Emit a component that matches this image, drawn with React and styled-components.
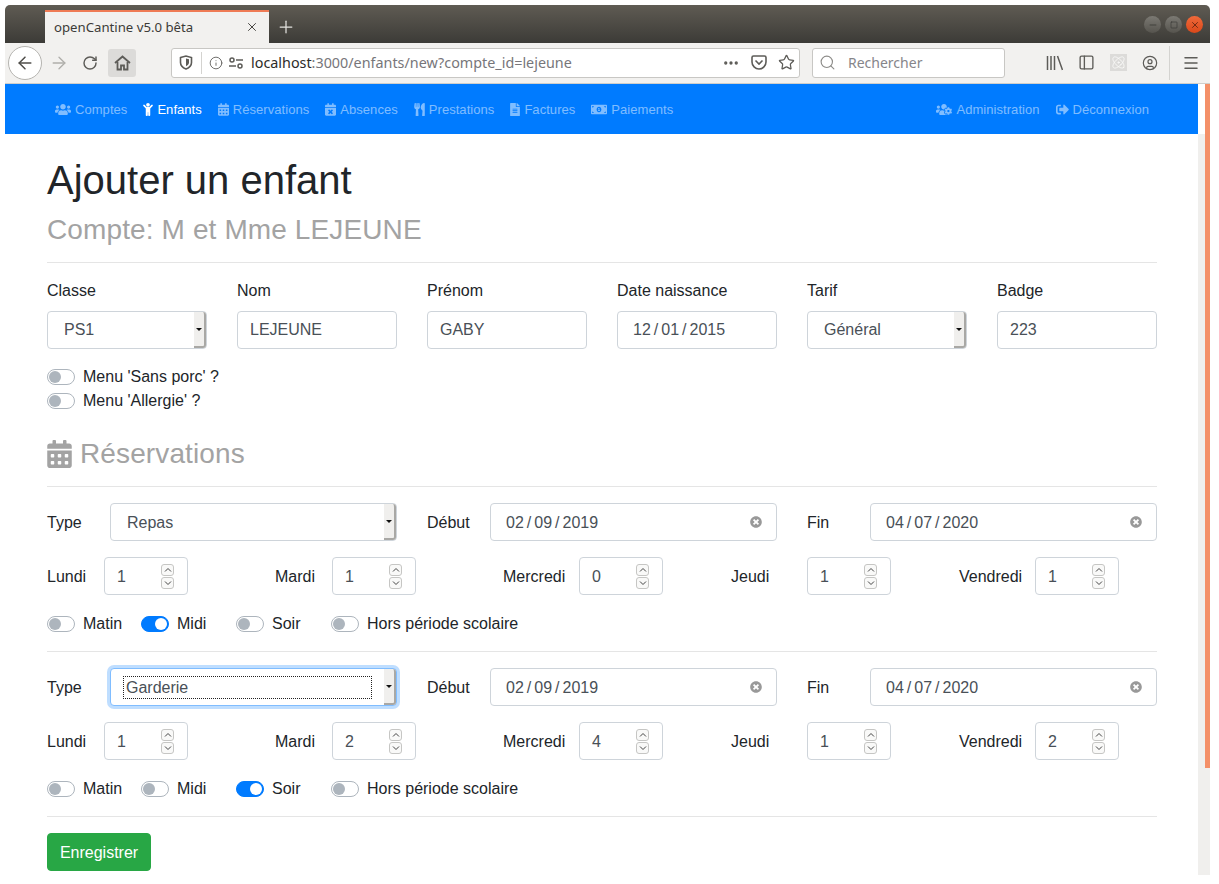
import React from "react";
import styled, { createGlobalStyle } from "styled-components";
import {
  FaUsers, FaChild, FaCalendarAlt, FaCalendarTimes, FaUtensils, FaFileAlt,
  FaMoneyBillAlt, FaUsersCog, FaSignOutAlt, FaTimesCircle,
} from "react-icons/fa";
import {
  ArrowLeft, ArrowRight, RotateCw, Info, Ellipsis, Star, Search, PanelLeft, Atom, CircleUser, Menu, X, Minus, Square, Plus,
} from "lucide-react";

const GlobalStyle = createGlobalStyle`
  html, body { margin: 0; padding: 0; background: #fff; overflow: hidden; }
  body { font-family: "Liberation Sans", Arial, sans-serif; font-size: 16px; line-height: 24px; color: #212529; }
  * { box-sizing: border-box; }
`;

const Window = styled.div`
  margin: 5px 0 0 5px;
  width: 1205px;
  height: 870px;
  display: flex;
  flex-direction: column;
  overflow: hidden;
  border-radius: 5px 5px 0 0;
`;

const TabBar = styled.div`
  height: 38px;
  flex: none;
  display: flex;
  align-items: flex-end;
  padding-left: 40px;
  background: linear-gradient(#5f5b53, #3c3b37);
`;
const Tab = styled.div`
  width: 224px;
  height: 33px;
  display: flex;
  align-items: center;
  justify-content: space-between;
  padding: 0 10px 2px 9px;
  background: #f2f1ef;
  border-top: 2px solid #ef7b55;
  font-family: "Noto Sans", sans-serif;
  font-size: 13.2px;
  color: #3c3b37;
`;
const NewTab = styled.div`
  width: 34px;
  height: 33px;
  display: flex;
  align-items: center;
  justify-content: center;
  color: #e4e3df;
`;
const WindowButtons = styled.div`
  margin-left: auto;
  align-self: flex-start;
  margin-top: 11px;
  margin-right: 7px;
  display: flex;
  gap: 4px;
`;
const WindowButton = styled.div`
  width: 17px;
  height: 17px;
  border-radius: 50%;
  display: flex;
  align-items: center;
  justify-content: center;
  color: ${(p) => (p.$close ? "#5c2410" : "#3b3a36")};
  background: ${(p) => (p.$close ? "linear-gradient(#f0693a, #d9481a)" : "linear-gradient(#7b7973, #56544e)")};
`;

const Toolbar = styled.div`
  height: 41px;
  flex: none;
  display: flex;
  align-items: center;
  padding: 0 4px 1px 3px;
  background: #f2f1ef;
  border-bottom: 1px solid #cfcecb;
  color: #5d5c58;
`;
const BackButton = styled.div`
  width: 34px;
  height: 34px;
  border-radius: 50%;
  background: #fff;
  border: 1px solid #b5b4b0;
  display: flex;
  align-items: center;
  justify-content: center;
  color: #4f4e4a;
`;
const ToolIcon = styled.div`
  width: ${(p) => p.$w || 32}px;
  height: 28px;
  flex: none;
  display: flex;
  align-items: center;
  justify-content: center;
  color: ${(p) => p.$color || "inherit"};
  background: ${(p) => p.$bg || "none"};
  border-radius: 3px;
`;
const Spacer = styled.span`
  width: ${(p) => p.$w}px;
  flex: none;
`;
const AtomBox = styled.span`
  width: 17px;
  height: 17px;
  display: flex;
  align-items: center;
  justify-content: center;
  background: #dcdbd9;
  color: #fbfbfa;
`;
const InputBar = styled.div`
  height: 30px;
  flex: ${(p) => (p.$w ? "none" : "1")};
  width: ${(p) => (p.$w ? `${p.$w}px` : "auto")};
  display: flex;
  align-items: center;
  background: #fff;
  border: 1px solid #c8c7c4;
  border-radius: 3px;
  font-family: "Noto Sans", sans-serif;
  font-size: 14px;
`;
const UrlDivider = styled.span`
  width: 1px;
  height: 22px;
  background: #d4d3d0;
  margin: 0 4px 0 2px;
`;
const UrlText = styled.span`
  flex: 1;
  color: #77767a;
  margin-left: 5px;
  font-size: 14.35px;
  strong { font-weight: 400; color: #2c2b28; }
`;
const SearchHint = styled.span`
  color: #86858a;
  margin-left: 7px;
`;
const ToolSeparator = styled.span`
  width: 1px;
  height: 34px;
  background: #d4d3d0;
  margin: 0 6px 0 3px;
`;

const Body = styled.div`
  flex: 1;
  min-height: 0;
  display: flex;
`;
const Main = styled.div`
  flex: 1;
  min-width: 0;
`;
const Scrollbar = styled.div`
  width: 12px;
  flex: none;
  padding-left: 7px;
  background: linear-gradient(#fff 50px, #f0efed 50px);
`;
const Thumb = styled.div`
  width: 5px;
  height: 684px;
  background: #f49068;
`;

const Nav = styled.nav`
  height: 50px;
  display: flex;
  align-items: center;
  justify-content: space-between;
  padding: 1px 41px 0 42px;
  background: #007bff;
`;
const NavGroup = styled.div`
  display: flex;
`;
const NavLink = styled.a`
  display: flex;
  align-items: center;
  gap: 4px;
  padding: 0 8px;
  font-size: 13px;
  letter-spacing: 0.05px;
  color: ${(p) => (p.$active ? "#fff" : "rgba(255,255,255,.5)")};
`;
const NavGlyph = styled.span`
  display: flex;
  svg { width: ${(p) => p.$w}px; height: 13px; }
`;

const Container = styled.main`
  padding: 22px 41px 0 42px;
`;
const Title = styled.h1`
  margin: 0 0 9px;
  font-size: 40px;
  line-height: 48px;
  font-weight: 400;
`;
const SubTitle = styled.h3`
  margin: 0;
  font-size: 28px;
  line-height: 34px;
  font-weight: 400;
  letter-spacing: 0.12px;
  color: #a3a3a3;
  display: flex;
  align-items: center;
  gap: 8px;
  svg { height: 28px; width: 25px; margin-top: -1px; }
`;
const Rule = styled.hr`
  margin: 15px 0 16px;
  height: 1px;
  border: 0;
  background: rgba(0,0,0,.1);
`;
const FieldGrid = styled.div`
  display: grid;
  grid-template-columns: repeat(6, 160px);
  column-gap: 30px;
`;
const FieldLabel = styled.label`
  display: block;
  margin-bottom: 8px;
`;
const Control = styled.div`
  height: 38px;
  display: flex;
  align-items: center;
  background: #fff;
  border: 1px solid ${(p) => (p.$focus ? "#80bdff" : "#ced4da")};
  border-radius: 4px;
  color: #495057;
  box-shadow: ${(p) => (p.$focus ? "0 0 0 3px rgba(0,123,255,.25)" : "none")};
`;
const TextValue = styled(Control)`
  padding-left: 12px;
`;
const DateControl = styled(Control)`
  padding: ${(p) => (p.$low ? "2px" : "0")} 14px 0 15px;
  justify-content: space-between;
  > svg { color: #999; width: 12px; height: 12px; margin-top: -2px; }
`;
const DateSep = styled.span`
  margin: 0 3px;
`;
const SelectValue = styled.span`
  flex: 1;
  height: 23px;
  line-height: ${(p) => (p.$high ? 21 : 23)}px;
  margin: 0 12px 0 ${(p) => (p.$focus ? 12 : 16)}px;
  padding-left: ${(p) => (p.$focus ? 3 : 0)}px;
  outline: ${(p) => (p.$focus ? "1px dotted #222" : "none")};
  outline-offset: -1px;
`;
const SelectArrow = styled.span`
  width: 12px;
  height: 36px;
  flex: none;
  display: flex;
  align-items: center;
  justify-content: center;
  background: #f0efed;
  border-right: 2px solid #a9a8a5;
  border-bottom: 2px solid #a9a8a5;
  border-radius: 0 3px 3px 0;
  &::after {
    content: "";
    border-left: 3px solid transparent;
    border-right: 3px solid transparent;
    border-top: 3px solid #111;
  }
`;

const SwitchBox = styled.div`
  display: flex;
  height: 24px;
  align-items: center;
  width: ${(p) => (p.$w ? `${p.$w}px` : "auto")};
`;
const SwitchTrack = styled.span`
  position: relative;
  width: 28px;
  height: 16px;
  flex: none;
  margin-right: 8px;
  border-radius: 8px;
  border: 1px solid ${(p) => (p.$on ? "#007bff" : "#adb5bd")};
  background: ${(p) => (p.$on ? "#007bff" : "#fff")};
  &::after {
    content: "";
    position: absolute;
    top: 1px;
    left: ${(p) => (p.$on ? 13 : 1)}px;
    width: 12px;
    height: 12px;
    border-radius: 50%;
    background: ${(p) => (p.$on ? "#fff" : "#adb5bd")};
  }
`;
const SwitchList = styled.div`
  margin: 16px 0 24px;
`;
const SwitchRow = styled.div`
  display: flex;
`;

const TripleRow = styled.div`
  display: grid;
  grid-template-columns: repeat(3, 350px);
  column-gap: 30px;
`;
const InlineField = styled.div`
  display: flex;
  align-items: center;
`;
const InlineLabel = styled.span`
  width: ${(p) => p.$w || 63}px;
  flex: none;
  padding-top: 2px;
`;
const InlineBody = styled.div`
  flex: 1;
`;
const DaysRow = styled.div`
  display: grid;
  grid-template-columns: repeat(5, 198px);
  column-gap: 30px;
  margin: 16px 0 17px;
`;
const NumberControl = styled(Control)`
  width: 84px;
  padding: 2px 13px 0 12px;
  justify-content: space-between;
`;
const Spinner = styled.span`
  display: flex;
  flex-direction: column;
  gap: 1px;
  margin-top: -2px;
`;
const SpinButton = styled.span`
  width: 13px;
  height: 12px;
  display: flex;
  align-items: center;
  justify-content: center;
  background: #f9f9f8;
  border: 1px solid #c6c6c4;
  border-radius: 3px;
  color: #444;
`;
const SaveButton = styled.button`
  display: block;
  width: 104px;
  height: 38px;
  padding: 2px 0 0;
  border: 1px solid #28a745;
  border-radius: 4px;
  background: #28a745;
  color: #fff;
  font: inherit;
`;

const Chevron = ({ up }) => (
  <svg width="8" height="6" viewBox="0 0 8 6" fill="none" stroke="currentColor" strokeWidth="1">
    <path d={up ? "M1 4.500l3-3 3 3" : "M1 1.500l3 3 3-3"} />
  </svg>
);

const Switch = ({ on, label, w }) => (
  <SwitchBox $w={w}>
    <SwitchTrack $on={on} />
    {label}
  </SwitchBox>
);

const DateField = ({ d, m, y }) => (
  <DateControl $low>
    <span>{d}<DateSep>/</DateSep>{m}<DateSep>/</DateSep>{y}</span>
    <FaTimesCircle />
  </DateControl>
);

const NumberField = ({ label, w, value }) => (
  <InlineField>
    <InlineLabel $w={w}>{label}</InlineLabel>
    <NumberControl>
      {value}
      <Spinner>
        <SpinButton><Chevron up /></SpinButton>
        <SpinButton><Chevron /></SpinButton>
      </Spinner>
    </NumberControl>
  </InlineField>
);

const Reservation = ({ type, focus, days, on }) => (
  <>
    <TripleRow>
      <InlineField>
        <InlineLabel>Type</InlineLabel>
        <InlineBody>
          <Control $focus={focus}>
            <SelectValue $focus={focus}>{type}</SelectValue>
            <SelectArrow />
          </Control>
        </InlineBody>
      </InlineField>
      <InlineField>
        <InlineLabel>Début</InlineLabel>
        <InlineBody><DateField d="02" m="09" y="2019" /></InlineBody>
      </InlineField>
      <InlineField>
        <InlineLabel>Fin</InlineLabel>
        <InlineBody><DateField d="04" m="07" y="2020" /></InlineBody>
      </InlineField>
    </TripleRow>
    <DaysRow>
      <NumberField label="Lundi" w={57} value={days[0]} />
      <NumberField label="Mardi" w={57} value={days[1]} />
      <NumberField label="Mercredi" w={76} value={days[2]} />
      <NumberField label="Jeudi" w={76} value={days[3]} />
      <NumberField label="Vendredi" w={76} value={days[4]} />
    </DaysRow>
    <SwitchRow>
      <Switch label="Matin" w={94} on={on === "Matin"} />
      <Switch label="Midi" w={95} on={on === "Midi"} />
      <Switch label="Soir" w={95} on={on === "Soir"} />
      <Switch label="Hors période scolaire" />
    </SwitchRow>
    <Rule />
  </>
);

export default function App() {
  return (
    <>
      <GlobalStyle />
      <Window>
        <TabBar>
          <Tab>
            openCantine v5.0 bêta
            <X size={14} strokeWidth={1.6} />
          </Tab>
          <NewTab><Plus size={20} strokeWidth={1.5} /></NewTab>
          <WindowButtons>
            <WindowButton><Minus size={10} /></WindowButton>
            <WindowButton><Square size={8} /></WindowButton>
            <WindowButton $close><X size={10} /></WindowButton>
          </WindowButtons>
        </TabBar>
        <Toolbar>
          <BackButton><ArrowLeft size={20} strokeWidth={1.8} /></BackButton>
          <ToolIcon $w={33} $color="#b0afab"><ArrowRight size={20} strokeWidth={1.6} /></ToolIcon>
          <ToolIcon $w={30}><RotateCw size={16} strokeWidth={2.2} /></ToolIcon>
          <Spacer $w={3} />
          <ToolIcon $w={28} $bg="#dcdbd9">
            <svg width="17" height="16" viewBox="0 0 17 16" fill="none" stroke="currentColor" strokeWidth="1.800">
              <path d="M1 8l7.500-6.500L16 8" />
              <path d="M3.500 7v7.500h3.500v-4h3v4h3.500V7" />
            </svg>
          </ToolIcon>
          <Spacer $w={35} />
          <InputBar>
            <ToolIcon $w={27}>
              <svg width="14" height="15" viewBox="0 0 14 15" fill="none" stroke="currentColor" strokeWidth="1.6">
                <path d="M1.500 2.500L7 1l5.500 1.500v5C12.500 11 9.500 13 7 14c-2.500-1-5.500-3-5.500-6.500z" />
                <path d="M7 3.500l3 .8v3C10 9.500 8.500 10.500 7 11.200z" fill="currentColor" stroke="none" />
              </svg>
            </ToolIcon>
            <UrlDivider />
            <ToolIcon $w={20}><Info size={14} strokeWidth={1.5} /></ToolIcon>
            <ToolIcon $w={20}>
              <svg width="16" height="12" viewBox="0 0 16 12" fill="none" stroke="currentColor" strokeWidth="1.500">
                <circle cx="4" cy="3" r="2" />
                <path d="M8 3h7M1 9h7" />
                <circle cx="12" cy="9" r="2" />
              </svg>
            </ToolIcon>
            <UrlText><strong>localhost</strong>:3000/enfants/new?compte_id=lejeune</UrlText>
            <ToolIcon $w={28}><Ellipsis size={18} strokeWidth={2.4} /></ToolIcon>
            <ToolIcon $w={28}>
              <svg width="16" height="15" viewBox="0 0 16 15" fill="none" stroke="currentColor" strokeWidth="1.600">
                <path d="M1 2.500c0-.8.600-1.500 1.500-1.500h11c.9 0 1.500.7 1.500 1.500V7c0 3.800-3.200 7-7 7s-7-3.200-7-7z" />
                <path d="M4.500 5.500L8 9l3.500-3.500" />
              </svg>
            </ToolIcon>
            <ToolIcon $w={26}><Star size={17} strokeWidth={1.8} /></ToolIcon>
          </InputBar>
          <Spacer $w={12} />
          <InputBar $w={193}>
            <ToolIcon $w={28} $color="#8c8b88"><Search size={17} strokeWidth={1.6} /></ToolIcon>
            <SearchHint>Rechercher</SearchHint>
          </InputBar>
          <Spacer $w={33} />
          <ToolIcon>
            <svg width="18" height="16" viewBox="0 0 18 16" fill="none" stroke="currentColor" strokeWidth="1.500">
              <path d="M2.500 1v14M6 1v14M9.500 1v14M12.500 1l5 14" />
            </svg>
          </ToolIcon>
          <ToolIcon><PanelLeft size={17} strokeWidth={1.9} /></ToolIcon>
          <ToolIcon><AtomBox><Atom size={15} strokeWidth={1.4} /></AtomBox></ToolIcon>
          <ToolIcon><CircleUser size={16} strokeWidth={1.8} /></ToolIcon>
          <ToolSeparator />
          <ToolIcon $w={30}><Menu size={18} strokeWidth={2} /></ToolIcon>
        </Toolbar>
        <Body>
          <Main>
            <Nav>
              <NavGroup>
                <NavLink><NavGlyph $w={16}><FaUsers /></NavGlyph>Comptes</NavLink>
                <NavLink $active><NavGlyph $w={10}><FaChild /></NavGlyph>Enfants</NavLink>
                <NavLink><NavGlyph $w={11}><FaCalendarAlt /></NavGlyph>Réservations</NavLink>
                <NavLink><NavGlyph $w={11}><FaCalendarTimes /></NavGlyph>Absences</NavLink>
                <NavLink><NavGlyph $w={11}><FaUtensils /></NavGlyph>Prestations</NavLink>
                <NavLink><NavGlyph $w={10}><FaFileAlt /></NavGlyph>Factures</NavLink>
                <NavLink><NavGlyph $w={16}><FaMoneyBillAlt /></NavGlyph>Paiements</NavLink>
              </NavGroup>
              <NavGroup>
                <NavLink><NavGlyph $w={16}><FaUsersCog /></NavGlyph>Administration</NavLink>
                <NavLink><NavGlyph $w={13}><FaSignOutAlt /></NavGlyph>Déconnexion</NavLink>
              </NavGroup>
            </Nav>
            <Container>
              <Title>Ajouter un enfant</Title>
              <SubTitle>Compte: M et Mme LEJEUNE</SubTitle>
              <Rule />
              <FieldGrid>
                <div>
                  <FieldLabel>Classe</FieldLabel>
                  <Control><SelectValue $high>PS1</SelectValue><SelectArrow /></Control>
                </div>
                <div>
                  <FieldLabel>Nom</FieldLabel>
                  <TextValue>LEJEUNE</TextValue>
                </div>
                <div>
                  <FieldLabel>Prénom</FieldLabel>
                  <TextValue>GABY</TextValue>
                </div>
                <div>
                  <FieldLabel>Date naissance</FieldLabel>
                  <DateControl><span>12<DateSep>/</DateSep>01<DateSep>/</DateSep>2015</span></DateControl>
                </div>
                <div>
                  <FieldLabel>Tarif</FieldLabel>
                  <Control><SelectValue $high>Général</SelectValue><SelectArrow /></Control>
                </div>
                <div>
                  <FieldLabel>Badge</FieldLabel>
                  <TextValue>223</TextValue>
                </div>
              </FieldGrid>
              <SwitchList>
                <Switch label="Menu 'Sans porc' ?" />
                <Switch label="Menu 'Allergie' ?" />
              </SwitchList>
              <SubTitle><FaCalendarAlt />Réservations</SubTitle>
              <Rule />
              <Reservation type="Repas" days={[1, 1, 0, 1, 1]} on="Midi" />
              <Reservation type="Garderie" focus days={[1, 2, 4, 1, 2]} on="Soir" />
              <SaveButton>Enregistrer</SaveButton>
            </Container>
          </Main>
          <Scrollbar><Thumb /></Scrollbar>
        </Body>
      </Window>
    </>
  );
}
